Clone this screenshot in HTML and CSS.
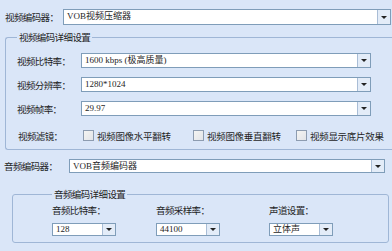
FILE: index.html
```html
<!DOCTYPE html>
<html lang="zh-CN">
<head>
    <meta charset="UTF-8">
    <title>编码设置</title>
    <link rel="stylesheet" href="styles.css">
</head>
<body>

<div class="row row-top">
    <span class="label label-main">视频编码器：</span>
    <div class="combo combo-main">
        <span class="value">VOB视频压缩器</span>
        <span class="arrow"></span>
    </div>
</div>

<fieldset class="group group-video">
    <legend>视频编码详细设置</legend>
    <div class="row row-video">
        <span class="label label-video">视频比特率：</span>
        <div class="combo combo-video">
            <span class="value">1600 kbps (极高质量)</span>
            <span class="arrow"></span>
        </div>
    </div>
    <div class="row row-video">
        <span class="label label-video">视频分辨率：</span>
        <div class="combo combo-video">
            <span class="value">1280*1024</span>
            <span class="arrow"></span>
        </div>
    </div>
    <div class="row row-video">
        <span class="label label-video">视频帧率：</span>
        <div class="combo combo-video">
            <span class="value">29.97</span>
            <span class="arrow"></span>
        </div>
    </div>
    <div class="row row-filters">
        <span class="label label-filter">视频滤镜：</span>
        <label class="check check-1"><span class="box"></span>视频图像水平翻转</label>
        <label class="check check-2"><span class="box"></span>视频图像垂直翻转</label>
        <label class="check"><span class="box"></span>视频显示底片效果</label>
    </div>
</fieldset>

<div class="row row-audio">
    <span class="label label-audio">音频编码器：</span>
    <div class="combo combo-audio">
        <span class="value">VOB音频编码器</span>
        <span class="arrow"></span>
    </div>
</div>

<fieldset class="group group-audio">
    <legend>音频编码详细设置</legend>
    <div class="audio-grid">
        <div class="col">
            <span class="label">音频比特率：</span>
            <div class="combo combo-small">
                <span class="value">128</span>
                <span class="arrow"></span>
            </div>
        </div>
        <div class="col">
            <span class="label">音频采样率：</span>
            <div class="combo combo-small">
                <span class="value">44100</span>
                <span class="arrow"></span>
            </div>
        </div>
        <div class="col">
            <span class="label">声道设置：</span>
            <div class="combo combo-small">
                <span class="value">立体声</span>
                <span class="arrow"></span>
            </div>
        </div>
    </div>
</fieldset>

</body>
</html>
```

FILE: styles.css
```css
body {
    margin: 0;
    padding-top: 9px;
    background-color: #dae6f8;
    color: #1e1e1e;
    font-family: "Noto Sans CJK SC", sans-serif;
    font-size: 9.5px;
    overflow: hidden;
}
.row {
    display: flex;
    align-items: center;
}
.label {
    line-height: 12px;
    letter-spacing: -0.6px;
    white-space: nowrap;
}
/* Combo boxes */
.combo {
    display: flex;
    box-sizing: border-box;
    border: 1px solid #7f9db9;
    background-color: #ffffff;
}
.combo .value {
    flex: 1;
    padding-left: 3px;
    font-family: "Liberation Serif", "Noto Sans CJK SC", serif;
    font-size: 9px;
    line-height: 12px;
    white-space: nowrap;
    overflow: hidden;
}
.combo .arrow {
    width: 12px;
    border-left: 1px solid #a9bdd6;
    background-color: #e3ecf8;
    display: flex;
    align-items: center;
    justify-content: center;
}
.combo .arrow::before {
    content: "";
    border-left: 3px solid transparent;
    border-right: 3px solid transparent;
    border-top: 3px solid #222;
}
.row-top {
    padding-left: 5px;
}
.label-main {
    width: 58px;
}
.combo-main {
    width: 328px;
    height: 16px;
}
/* Group boxes */
.group {
    margin: 0;
    padding: 0;
    border: 1px solid #9fb6d6;
    border-radius: 3px;
    min-width: 0;
}
.group legend {
    padding: 0 2px;
    line-height: 12px;
    letter-spacing: -0.6px;
}
.group-video {
    margin: 6px 0 0 5px;
    padding: 10px 0 7px 11px;
    border-right: none;
    border-radius: 3px 0 0 3px;
}
.row-video {
    margin-bottom: 9px;
}
.label-video {
    width: 64px;
}
.combo-video {
    width: 290px;
    height: 15px;
}
.row-filters {
    margin-top: 13px;
    height: 13px;
}
.label-filter {
    width: 65px;
    padding-left: 1px;
}
.check {
    display: flex;
    align-items: center;
    gap: 3px;
    line-height: 12px;
    letter-spacing: -0.3px;
    white-space: nowrap;
}
.check-1 {
    width: 110px;
}
.check-2 {
    width: 103px;
}
.box {
    width: 11px;
    height: 11px;
    box-sizing: border-box;
    border: 1px solid #8d9cb0;
    background: linear-gradient(135deg, #f4f4f2, #e2e4e8);
}
.row-audio {
    margin-top: 9px;
    padding-left: 4px;
}
.label-audio {
    width: 65px;
}
.combo-audio {
    width: 316px;
    height: 14px;
}
.group-audio {
    margin: 15px 3px 0 12px;
    padding: 4px 0 6px 39px;
}
.audio-grid {
    display: grid;
    grid-template-columns: 104px 113px auto;
}
.col {
    display: flex;
    flex-direction: column;
    gap: 7px;
}
.combo-small {
    width: 64px;
    height: 13px;
}
.combo-small .value {
    line-height: 11px;
}
```
